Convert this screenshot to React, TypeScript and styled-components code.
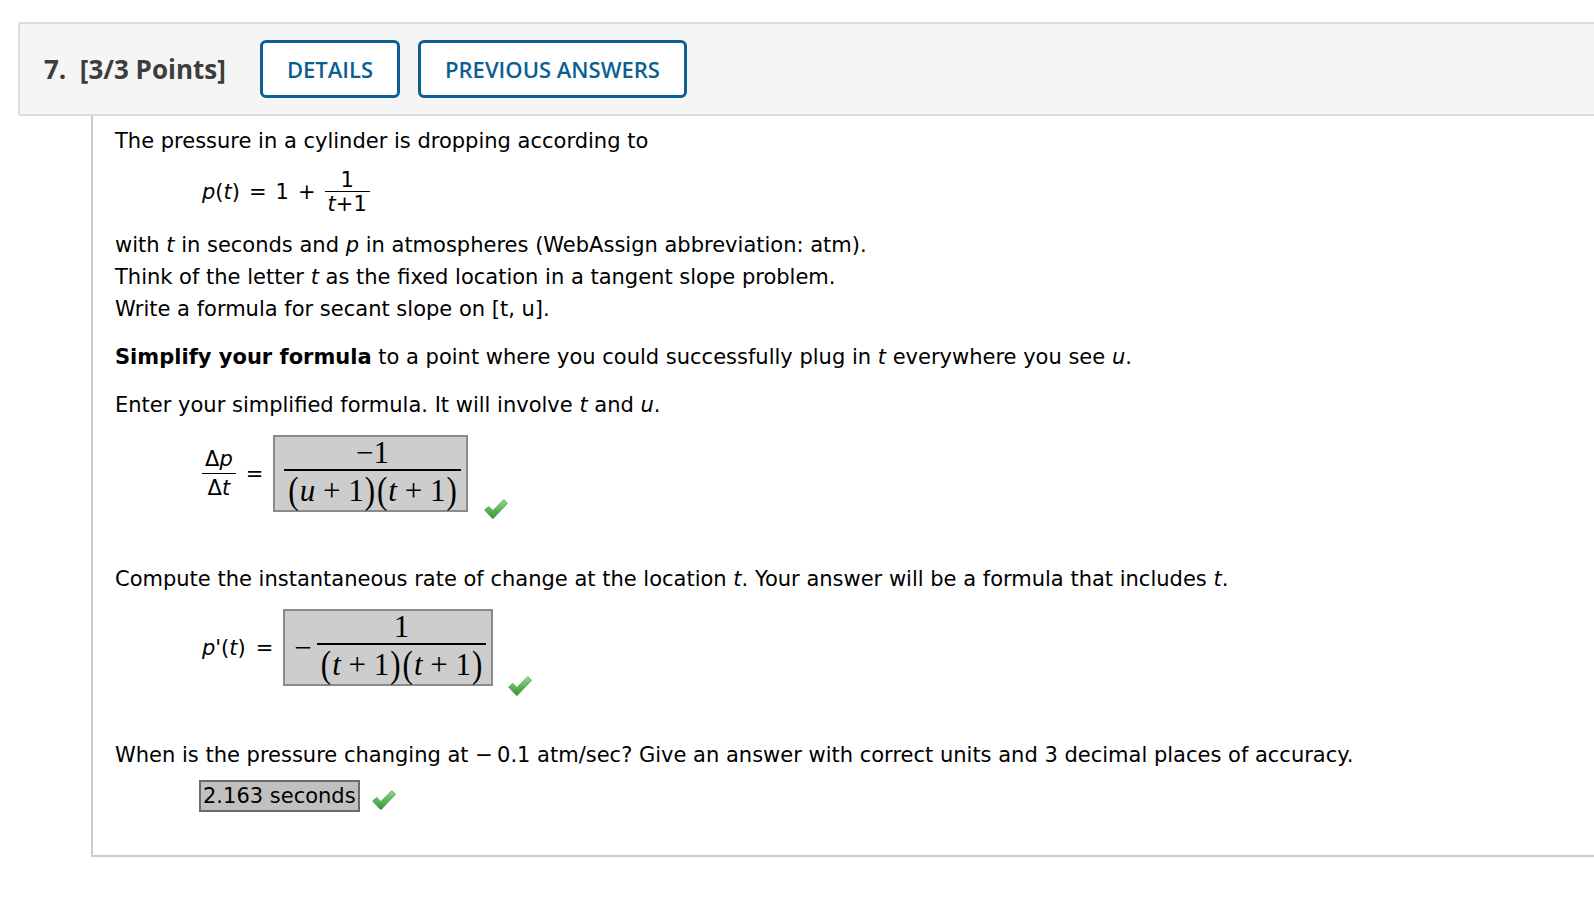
import React from "react";
import styled, { createGlobalStyle } from "styled-components";

const GlobalStyle = createGlobalStyle`
  html, body { margin: 0; padding: 0; background: #fff; }
  body {
    font-family: "DejaVu Sans", Verdana, sans-serif;
    color: #000;
    overflow: hidden;
  }
`;

const Page = styled.div`
  padding: 22px 0 0 18px;
`;

const Header = styled.div`
  display: flex;
  align-items: center;
  height: 90px;
  padding-left: 24px;
  background: #f5f5f5;
  border: 2px solid #dcdcdc;
  border-right: none;
  border-radius: 3px 0 0 3px;
`;

const Title = styled.div`
  font-family: "Open Sans", "Liberation Sans", sans-serif;
  font-weight: 700;
  font-size: 26px;
  color: #3d3d3d;
  margin-right: 34px;
  white-space: pre;
`;

const HeaderButton = styled.button`
  height: 58px;
  padding: 0 24px;
  margin-right: 18px;
  background: #fff;
  border: 3px solid #0c5f93;
  border-radius: 6px;
  color: #0c5f93;
  font-family: "Open Sans", "Liberation Sans", sans-serif;
  font-weight: 600;
  font-size: 22px;
  cursor: pointer;
`;

const Body = styled.div`
  margin-left: 73px;
  padding: 9px 0 43px 22px;
  border-left: 2px solid #cccccc;
  border-bottom: 2px solid #cccccc;
  font-size: 21px;
  line-height: 32px;
`;

const Para = styled.div<{ $top?: number }>`
  margin-top: ${(p) => p.$top ?? 0}px;
`;

const I = styled.i`
  font-style: italic;
`;

const FormulaRow = styled.div<{ $top: number; $indent?: number; $height?: number }>`
  display: flex;
  align-items: center;
  margin-top: ${(p) => p.$top}px;
  padding-left: ${(p) => p.$indent ?? 87}px;
  height: ${(p) => (p.$height ? `${p.$height}px` : "auto")};
  white-space: pre;
`;

const Op = styled.span`
  margin: 0 9px;
`;

const Frac = styled.span<{ $num: number; $den: number; $rule?: number }>`
  display: inline-flex;
  flex-direction: column;
  align-items: stretch;
  text-align: center;
  & > span:first-child {
    line-height: ${(p) => p.$num}px;
    padding: 0 3px;
  }
  & > span:last-child {
    line-height: ${(p) => p.$den}px;
    border-top: ${(p) => p.$rule ?? 1.5}px solid #000;
    padding: 0 3px;
  }
`;

const Eq = styled.span`
  margin: 0 10px;
`;

const MathBox = styled.span`
  display: inline-flex;
  align-items: center;
  background: #cdcdcd;
  border: 2px solid #8a8a8a;
  padding: 0 5px 0 9px;
  font-family: "Liberation Serif", "DejaVu Serif", serif;
  font-size: 31px;
`;

const MI = styled.span`
  font-style: italic;
`;

const Paren = styled.span`
  display: inline-block;
  margin: 0 1px;
  transform: scaleY(1.2);
`;

const Minus = styled.span`
  margin-right: 5px;
`;

const AnswerBox = styled.span`
  display: inline-block;
  background: #c0c0c0;
  border: 2px solid #6b6b6b;
  padding: 0 2px;
  line-height: 28px;
  font-size: 21px;
`;

const CheckWrap = styled.span<{ $gap: number; $drop: number }>`
  display: inline-flex;
  align-self: flex-end;
  margin-left: ${(p) => p.$gap}px;
  margin-bottom: ${(p) => -p.$drop}px;
`;

function Check({ gap, drop, id }: { gap: number; drop: number; id: string }) {
  return (
    <CheckWrap $gap={gap} $drop={drop}>
      <svg width="26" height="22" viewBox="0 0 25 21">
        <defs>
          <linearGradient id={id} x1="0" y1="0" x2="0" y2="1">
            <stop offset="0" stopColor="#9ad995" />
            <stop offset="0.5" stopColor="#5cb85a" />
            <stop offset="1" stopColor="#3a8f3a" />
          </linearGradient>
        </defs>
        <path
          d="M1.5 11.5 L5.5 8 L9.5 12 L20 1.5 L23.5 5 L10 19.5 Q9.5 20 9 19.5 Z"
          fill={`url(#${id})`}
          stroke="#4a9e48"
          strokeWidth="0.8"
          strokeLinejoin="round"
        />
      </svg>
    </CheckWrap>
  );
}

function Denominator({ a }: { a: string }) {
  return (
    <span>
      <Paren>(</Paren>
      <MI>{a}</MI> + 1<Paren>)</Paren>
      <Paren>(</Paren>
      <MI>t</MI> + 1<Paren>)</Paren>
    </span>
  );
}

export default function App() {
  return (
    <Page>
      <GlobalStyle />
      <Header>
        <Title>{"7.  [3/3 Points]"}</Title>
        <HeaderButton>DETAILS</HeaderButton>
        <HeaderButton>PREVIOUS ANSWERS</HeaderButton>
      </Header>
      <Body>
        <Para>The pressure in a cylinder is dropping according to</Para>

        <FormulaRow $top={10} $height={50}>
          <I>p</I>(<I>t</I>)<Op>=</Op>1<Op>+</Op>
          <Frac $num={22} $den={24}>
            <span>1</span>
            <span>
              <I>t</I>+1
            </span>
          </Frac>
        </FormulaRow>

        <Para $top={12}>
          with <I>t</I> in seconds and <I>p</I> in atmospheres (WebAssign abbreviation: atm).
          <br />
          Think of the letter <I>t</I> as the fixed location in a tangent slope problem.
          <br />
          Write a formula for secant slope on [t, u].
        </Para>

        <Para $top={16}>
          <b>Simplify your formula</b> to a point where you could successfully plug in <I>t</I>{" "}
          everywhere you see <I>u</I>.
        </Para>

        <Para $top={16}>
          Enter your simplified formula. It will involve <I>t</I> and <I>u</I>.
        </Para>

        <FormulaRow $top={14} $indent={87}>
          <Frac $num={27} $den={28} $rule={1.5}>
            <span>Δ<I>p</I></span>
            <span>Δ<I>t</I></span>
          </Frac>
          <Eq>=</Eq>
          <MathBox>
            <Frac $num={32} $den={39} $rule={2}>
              <span>−1</span>
              <Denominator a="u" />
            </Frac>
          </MathBox>
          <Check gap={15} drop={8} id="ck1" />
        </FormulaRow>

        <Para $top={51}>
          Compute the instantaneous rate of change at the location <I>t</I>. Your answer will be a
          formula that includes <I>t</I>.
        </Para>

        <FormulaRow $top={14} $indent={87}>
          <span>
            <I>p</I>'(<I>t</I>)
          </span>
          <Eq>=</Eq>
          <MathBox>
            <Minus>−</Minus>
            <Frac $num={32} $den={39} $rule={2}>
              <span>1</span>
              <Denominator a="t" />
            </Frac>
          </MathBox>
          <Check gap={14} drop={11} id="ck2" />
        </FormulaRow>

        <Para $top={53}>
          When is the pressure changing at −{"\u2009"}0.1 atm/sec? Give an answer with correct units
          and 3 decimal places of accuracy.
        </Para>

        <FormulaRow $top={9} $indent={84}>
          <AnswerBox>2.163 seconds</AnswerBox>
          <Check gap={11} drop={-1} id="ck3" />
        </FormulaRow>
      </Body>
    </Page>
  );
}
